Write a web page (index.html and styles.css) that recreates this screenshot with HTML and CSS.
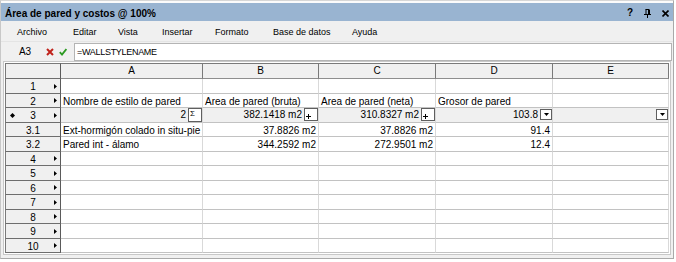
FILE: index.html
```html
<!DOCTYPE html>
<html lang="es">
<head>
<meta charset="utf-8">
<title>Área de pared y costos</title>
<link rel="stylesheet" href="styles.css">
</head>
<body>
<div class="window">
  <div class="titlebar">
    <span class="title">Área de pared y costos @ 100%</span>
    <div class="title-btns">
      <span class="qbtn">?</span>
      <svg class="pin" width="7" height="9" viewBox="0 0 7 9"><path d="M1.5 0.5H5M2 0.5V5M4.5 0.5V5M5.5 0.5V5M0 5.5H7M3.5 5.5V9" fill="none" stroke="#000" stroke-width="1"/></svg>
      <svg class="close" width="7" height="7" viewBox="0 0 7 7"><path d="M0.5 0.5L6.5 6.5M6.5 0.5L0.5 6.5" fill="none" stroke="#000" stroke-width="1.6"/></svg>
    </div>
  </div>
  <div class="menubar">
    <span>Archivo</span><span>Editar</span><span>Vista</span><span>Insertar</span><span>Formato</span><span>Base de datos</span><span>Ayuda</span>
  </div>
  <div class="formula">
    <span class="cellref">A3</span>
    <svg class="cancel" width="8" height="8" viewBox="0 0 8 8"><path d="M1 1L7 7M7 1L1 7" fill="none" stroke="#c0221b" stroke-width="2"/></svg>
    <svg class="accept" width="8" height="8" viewBox="0 0 8 8"><path d="M0.8 4.2L3 6.6L7.4 1" fill="none" stroke="#2c9a22" stroke-width="1.8"/></svg>
    <div class="finput">=WALLSTYLENAME</div>
  </div>
  <div class="gridwrap">
    <div class="sheet">
      <div class="rh ch"></div>
      <div class="ch">A</div><div class="ch">B</div><div class="ch">C</div><div class="ch">D</div><div class="ch">E</div>

      <div class="rh"><span></span><span class="num">1</span><svg class="arr" width="3" height="5" viewBox="0 0 3 5"><path d="M0 0L3 2.5L0 5Z"/></svg></div>
      <div class="c"></div><div class="c"></div><div class="c"></div><div class="c"></div><div class="c"></div>

      <div class="rh"><span></span><span class="num">2</span><svg class="arr" width="3" height="5" viewBox="0 0 3 5"><path d="M0 0L3 2.5L0 5Z"/></svg></div>
      <div class="c">Nombre de estilo de pared</div><div class="c">Area de pared (bruta)</div><div class="c">Area de pared (neta)</div><div class="c">Grosor de pared</div><div class="c"></div>

      <div class="rh"><svg class="dia" width="5" height="5" viewBox="0 0 5 5"><path d="M2.5 0L5 2.5L2.5 5L0 2.5Z"/></svg><span class="num">3</span><svg class="arr" width="3" height="5" viewBox="0 0 3 5"><path d="M0 0L3 2.5L0 5Z"/></svg></div>
      <div class="c act"><span class="val">2</span><span class="box sigma">Σ</span></div>
      <div class="c act"><span class="val">382.1418 m2</span><span class="box plus"><svg width="5" height="5" viewBox="0 0 5 5"><path d="M0 2.5H5M2.5 0V5" stroke="#000" stroke-width="1"/></svg></span></div>
      <div class="c act"><span class="val">310.8327 m2</span><span class="box plus"><svg width="5" height="5" viewBox="0 0 5 5"><path d="M0 2.5H5M2.5 0V5" stroke="#000" stroke-width="1"/></svg></span></div>
      <div class="c act"><span class="val">103.8</span><span class="box drop"><svg width="5" height="3" viewBox="0 0 5 3"><path d="M0 0H5L2.5 3Z"/></svg></span></div>
      <div class="c act"><span class="box drop"><svg width="5" height="3" viewBox="0 0 5 3"><path d="M0 0H5L2.5 3Z"/></svg></span></div>

      <div class="rh"><span></span><span class="num">3.1</span><span></span></div>
      <div class="c">Ext-hormigón colado in situ-pie</div><div class="c r">37.8826 m2</div><div class="c r">37.8826 m2</div><div class="c r">91.4</div><div class="c"></div>

      <div class="rh"><span></span><span class="num">3.2</span><span></span></div>
      <div class="c">Pared int - álamo</div><div class="c r">344.2592 m2</div><div class="c r">272.9501 m2</div><div class="c r">12.4</div><div class="c"></div>

      <div class="rh"><span></span><span class="num">4</span><svg class="arr" width="3" height="5" viewBox="0 0 3 5"><path d="M0 0L3 2.5L0 5Z"/></svg></div>
      <div class="c"></div><div class="c"></div><div class="c"></div><div class="c"></div><div class="c"></div>

      <div class="rh"><span></span><span class="num">5</span><svg class="arr" width="3" height="5" viewBox="0 0 3 5"><path d="M0 0L3 2.5L0 5Z"/></svg></div>
      <div class="c"></div><div class="c"></div><div class="c"></div><div class="c"></div><div class="c"></div>

      <div class="rh"><span></span><span class="num">6</span><svg class="arr" width="3" height="5" viewBox="0 0 3 5"><path d="M0 0L3 2.5L0 5Z"/></svg></div>
      <div class="c"></div><div class="c"></div><div class="c"></div><div class="c"></div><div class="c"></div>

      <div class="rh"><span></span><span class="num">7</span><svg class="arr" width="3" height="5" viewBox="0 0 3 5"><path d="M0 0L3 2.5L0 5Z"/></svg></div>
      <div class="c"></div><div class="c"></div><div class="c"></div><div class="c"></div><div class="c"></div>

      <div class="rh"><span></span><span class="num">8</span><svg class="arr" width="3" height="5" viewBox="0 0 3 5"><path d="M0 0L3 2.5L0 5Z"/></svg></div>
      <div class="c"></div><div class="c"></div><div class="c"></div><div class="c"></div><div class="c"></div>

      <div class="rh"><span></span><span class="num">9</span><svg class="arr" width="3" height="5" viewBox="0 0 3 5"><path d="M0 0L3 2.5L0 5Z"/></svg></div>
      <div class="c"></div><div class="c"></div><div class="c"></div><div class="c"></div><div class="c"></div>

      <div class="rh"><span></span><span class="num">10</span><svg class="arr" width="3" height="5" viewBox="0 0 3 5"><path d="M0 0L3 2.5L0 5Z"/></svg></div>
      <div class="c"></div><div class="c"></div><div class="c"></div><div class="c"></div><div class="c"></div>
    </div>
  </div>
</div>
</body>
</html>
```
FILE: styles.css
```css
html, body {
  margin: 0;
  background: #ffffff;
}
body {
  font-family: "Liberation Sans", Arial, sans-serif;
  color: #000;
}
.window {
  width: 674px;
  height: 259px;
  box-sizing: border-box;
  border: 1px solid #a9a9a9;
  border-top-color: #d6d6d6;
  border-left-color: #c8c8c8;
  background: linear-gradient(#fbfbfb 0 2px, #f0f0f0 2px);
  padding-top: 2px;
  display: flex;
  flex-direction: column;
}
.titlebar {
  height: 18px;
  box-sizing: border-box;
  background: #99b4d1;
  padding: 2px 4px 0 4px;
  display: flex;
  justify-content: space-between;
  align-items: flex-start;
}
.title {
  font-size: 10px;
  font-weight: bold;
  line-height: 17px;
  white-space: nowrap;
}
.title-btns {
  display: flex;
  align-items: center;
  gap: 11px;
  height: 15px;
}
.qbtn {
  font-size: 10px;
  font-weight: bold;
  line-height: 15px;
}
.pin { margin-top: 1px; }
.close { margin-top: 1px; }

.menubar {
  height: 21px;
  box-sizing: border-box;
  display: grid;
  grid-template-columns: 56px 45px 44px 53px 58px 79px auto;
  padding: 2px 0 0 16px;
  font-size: 9px;
  line-height: 19px;
  border-bottom: 1px solid #e4e4e4;
}
.menubar span { white-space: nowrap; }

.formula {
  height: 19px;
  display: flex;
  align-items: flex-start;
}
.cellref {
  width: 40px;
  margin-left: 4px;
  padding-top: 1px;
  text-align: center;
  font-size: 10px;
  line-height: 18px;
}
.cancel { margin: 6px 0 0 1px; }
.accept { margin: 6px 0 0 5px; }
.finput {
  flex: 1;
  margin: 1px 1px 0 7px;
  height: 18px;
  box-sizing: border-box;
  background: #fff;
  border: 1px solid #b4b4b4;
  padding-left: 2px;
  font-size: 9px;
  letter-spacing: -0.3px;
  line-height: 17px;
  white-space: nowrap;
}

.gridwrap {
  align-self: flex-start;
  margin-left: 2px;
  border: 1px solid #c8c8c8;
  padding: 1px;
  background: #fff;
}
.sheet {
  display: grid;
  grid-template-columns: 56px 142px 116px 117px 117px 116px;
  grid-template-rows: 16px repeat(12, 14.5px);
  font-size: 10px;
}
.sheet > div {
  box-sizing: border-box;
  border-right: 1px solid #d9d9d9;
  border-bottom: 1px solid #c2c2c2;
  overflow: hidden;
  white-space: nowrap;
}
.sheet > .ch {
  background: #f0f0f0;
  border-top: 1px solid #7a7a7a;
  border-right-color: #7a7a7a;
  border-bottom-color: #8e8e8e;
  text-align: center;
  line-height: 14px;
}
.sheet > .rh {
  background: #f0f0f0;
  border-left: 1px solid #7a7a7a;
  border-right-color: #5a5a5a;
  border-bottom-color: #6e6e6e;
  display: grid;
  grid-template-columns: 12px 1fr 12px;
  align-items: center;
}
.num {
  text-align: center;
  padding-top: 2px;
  line-height: 12px;
}
.arr { margin-left: 6px; }
.dia { margin-left: 4px; }

.sheet > .c {
  padding: 2px 2px 0 2px;
  line-height: 12px;
}
.sheet > .c.r { text-align: right; }
.sheet > .c.act {
  background: #f0f0f0;
  padding: 0;
  display: flex;
  justify-content: flex-end;
  align-items: center;
}
.val {
  padding-right: 2px;
  padding-top: 1px;
  line-height: 12px;
}
.box {
  box-sizing: border-box;
  background: #fff;
  border: 1px solid #5f5f5f;
  display: flex;
}
.box.sigma {
  width: 14px;
  height: 14px;
  font-size: 8px;
  line-height: 7px;
  padding: 1px 0 0 1px;
  align-items: flex-start;
}
.box.plus {
  width: 14px;
  height: 13px;
  align-items: flex-end;
  padding: 0 0 1px 1px;
}
.box.drop {
  width: 12px;
  height: 11px;
  align-items: center;
  justify-content: center;
}
```
